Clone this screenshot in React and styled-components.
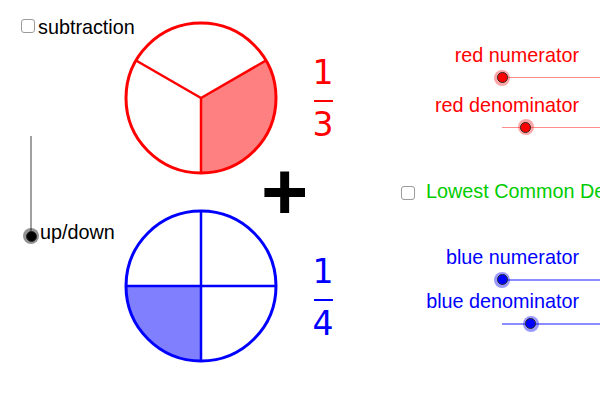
import React from 'react';
import styled, { createGlobalStyle } from 'styled-components';

const GlobalStyle = createGlobalStyle`
  html, body { margin: 0; padding: 0; background: #fff; }
  body { font-family: "Liberation Sans", Arial, sans-serif; }
`;

const Applet = styled.div`
  width: 600px;
  height: 400px;
  overflow: hidden;
  background: #fff;
  display: grid;
  grid-template-columns: 123px 277px 200px;
  font-family: "Liberation Sans", Arial, sans-serif;
  font-size: 19.8px;
  line-height: 22px;
`;

const LeftPanel = styled.div`
  display: flex;
  flex-direction: column;
  padding: 16px 0 0 21px;
`;

const CheckRow = styled.label`
  display: flex;
  align-items: flex-start;
  gap: ${p => p.$gap}px;
  color: ${p => p.$color};
  white-space: nowrap;
  margin-top: ${p => p.$mt || 0}px;
  padding-left: ${p => p.$pl || 0}px;
`;

const Box = styled.span`
  flex: none;
  box-sizing: border-box;
  width: 14px;
  height: 14px;
  margin-top: ${p => p.$mt}px;
  border: 1.5px solid #9a9a9a;
  border-radius: 3px;
  background: #fff;
`;

const VSlider = styled.div`
  display: flex;
  align-items: flex-end;
  margin: 98px 0 0 1px;
`;

const VTrack = styled.div`
  position: relative;
  flex: none;
  width: 18px;
  height: 108px;
  display: flex;
  justify-content: center;
`;

const VLine = styled.span`
  width: 1.5px;
  height: 100px;
  background: #a0a0a0;
`;

const Thumb = styled.span`
  position: absolute;
  top: ${p => p.$top};
  width: 16px;
  height: 16px;
  border-radius: 50%;
  background: ${p => p.$halo};
  transform: translate(-50%, -50%);
  display: flex;
  align-items: center;
  justify-content: center;
  &::after {
    content: '';
    box-sizing: border-box;
    width: 11px;
    height: 11px;
    border-radius: 50%;
    background: ${p => p.$color};
    border: 1px solid #2a2a2a;
  }
`;

const VLabel = styled.span`
  color: #000;
  white-space: nowrap;
  margin-bottom: 1px;
`;

const Stage = styled.div`
  display: flex;
  flex-direction: column;
  padding-top: 20px;
`;

const PieRow = styled.div`
  display: flex;
  align-items: flex-start;
  gap: 24px;
`;

const PieSvg = styled.svg`
  display: block;
  flex: none;
`;

const Fraction = styled.div`
  display: flex;
  flex-direction: column;
  align-items: center;
  width: 40px;
  margin-top: ${p => p.$mt}px;
  color: ${p => p.$color};
  font-family: "DejaVu Sans", "Liberation Sans", sans-serif;
  font-size: 33px;
  line-height: 33px;
`;

const FractionBar = styled.span`
  width: 19px;
  height: 1.5px;
  background: currentColor;
  margin: 11px 0 6px;
`;

const PlusRow = styled.div`
  height: 31.5px;
  display: flex;
  align-items: center;
  padding-left: 138px;
`;

const Plus = styled.span`
  font-family: "Liberation Sans", Arial, sans-serif;
  font-weight: bold;
  font-size: 81px;
  line-height: 31.5px;
  color: #000;
`;

const RightPanel = styled.div`
  display: flex;
  flex-direction: column;
`;

const SliderLabel = styled.div`
  text-align: right;
  padding-right: 21px;
  white-space: nowrap;
  color: ${p => p.$color};
  margin-top: ${p => p.$mt}px;
`;

const Track = styled.div`
  position: relative;
  flex: none;
  width: 200px;
  height: 16px;
  margin: ${p => p.$mt}px 0 0 102px;
  display: flex;
  align-items: center;
`;

const TrackLine = styled.span`
  width: 100%;
  height: 1.5px;
  background: ${p => p.$color};
`;

const LCDText = styled.span`
  margin-left: 0;
`;

const TRACK_LEN = 200;

function HSlider({ color, halo, line, value, min, max, mt }) {
  const x = ((value - min) / (max - min)) * TRACK_LEN;
  return (
    <Track $mt={mt}>
      <TrackLine $color={line} />
      <Thumb $top="50%" $halo={halo} $color={color} style={{ left: `${x}px` }} />
    </Track>
  );
}

const C = 78;
const R = 75;

function pt(deg) {
  const a = (deg * Math.PI) / 180;
  return [C + R * Math.cos(a), C - R * Math.sin(a)];
}

function Pie({ stroke, fill, angles, from, to }) {
  const [x1, y1] = pt(from);
  const [x2, y2] = pt(to);
  const sweep = (from - to + 360) % 360;
  const large = sweep > 180 ? 1 : 0;
  return (
    <PieSvg width="156" height="156" viewBox="0 0 156 156">
      <path d={`M${C},${C} L${x1},${y1} A${R},${R} 0 ${large} 1 ${x2},${y2} Z`} fill={fill} />
      {angles.map(a => {
        const [x, y] = pt(a);
        return <line key={a} x1={C} y1={C} x2={x} y2={y} stroke={stroke} strokeWidth="2.5" />;
      })}
      <circle cx={C} cy={C} r={R} fill="none" stroke={stroke} strokeWidth="3" />
    </PieSvg>
  );
}

export default function App() {
  return (
    <>
      <GlobalStyle />
      <Applet>
        <LeftPanel>
          <CheckRow $gap={3} $color="#000">
            <Box $mt={3} />
            <span>subtraction</span>
          </CheckRow>
          <VSlider>
            <VTrack>
              <VLine />
              <Thumb $top="100px" $halo="rgba(0,0,0,0.42)" $color="#000" style={{ left: '50%' }} />
            </VTrack>
            <VLabel>up/down</VLabel>
          </VSlider>
        </LeftPanel>

        <Stage>
          <PieRow>
            <Pie stroke="#ff0000" fill="#ff8080" angles={[150, 30, -90]} from={30} to={-90} />
            <Fraction $color="#ff0000" $mt={36}>
              <span>1</span>
              <FractionBar />
              <span>3</span>
            </Fraction>
          </PieRow>
          <PlusRow>
            <Plus>+</Plus>
          </PlusRow>
          <PieRow>
            <Pie stroke="#0000ff" fill="#8080ff" angles={[90, 0, -90, 180]} from={-90} to={180} />
            <Fraction $color="#0000ff" $mt={47.5}>
              <span>1</span>
              <FractionBar />
              <span>4</span>
            </Fraction>
          </PieRow>
        </Stage>

        <RightPanel>
          <SliderLabel $color="#ff0000" $mt={44}>red numerator</SliderLabel>
          <HSlider color="#ff0000" halo="rgba(255,0,0,0.35)" line="rgba(255,0,0,0.45)" value={1} min={1} max={400} mt={3.5} />
          <SliderLabel $color="#ff0000" $mt={8.3}>red denominator</SliderLabel>
          <HSlider color="#ff0000" halo="rgba(255,0,0,0.35)" line="rgba(255,0,0,0.45)" value={3} min={1} max={18} mt={3.5} />
          <CheckRow $gap={11} $color="#00cc00" $mt={44.7} $pl={1}>
            <Box $mt={6} />
            <LCDText>Lowest Common Denominator</LCDText>
          </CheckRow>
          <SliderLabel $color="#0000ff" $mt={44}>blue numerator</SliderLabel>
          <HSlider color="#0000ff" halo="rgba(0,0,255,0.4)" line="rgba(0,0,255,0.45)" value={1} min={1} max={400} mt={4} />
          <SliderLabel $color="#0000ff" $mt={1.8}>blue denominator</SliderLabel>
          <HSlider color="#0000ff" halo="rgba(0,0,255,0.4)" line="rgba(0,0,255,0.45)" value={4} min={1} max={22} mt={4.2} />
        </RightPanel>
      </Applet>
    </>
  );
}
